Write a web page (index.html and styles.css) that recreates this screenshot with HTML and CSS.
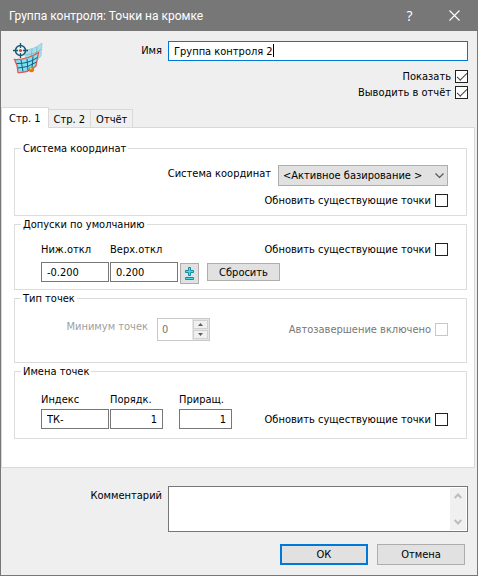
FILE: index.html
```
<!DOCTYPE html>
<html lang="ru">
<head>
    <meta charset="UTF-8">
    <meta name="viewport" content="width=device-width, initial-scale=1.0">
    <title>Группа контроля: Точки на кромке</title>
    <link rel="stylesheet" href="styles.css">
</head>
<body>

<div class="dialog">
    <header class="titlebar">
        <h1 class="title">Группа контроля: Точки на кромке</h1>
        <button class="title-btn" type="button">?</button>
        <button class="title-btn" type="button" aria-label="Закрыть">
            <svg width="11" height="11" viewBox="0 0 11 11"><path d="M.5.5l10 10M10.5.5l-10 10" fill="none" stroke="#fff" stroke-width="1.1"/></svg>
        </button>
    </header>

    <form class="content">
        <div class="head">
            <svg class="logo" width="30" height="32" viewBox="0 0 30 32">
                <path d="M10 8Q21 8 29 1L28 14Q25 19 15 21Z" fill="#a6dfea" stroke="#8fc5cf" stroke-width=".7"/>
                <path d="M13 13Q23 12 28 7M19 7L18 17M24 5L23 15" fill="none" stroke="#70b9c8" stroke-width=".8"/>
                <path d="M1.500 17.500Q14 18 25.500 10.500L23 24Q15 31 5 30.500Q5 24 1.500 17.500Z" fill="#7fe0f5" stroke="#e4574e" stroke-width="1.300"/>
                <path d="M3.500 21.500Q15 22 24.500 15.500M5 26Q15 26 23.500 20M8 18L10 29.500M14 17L15 28.500M20 14.500L19 26" fill="none" stroke="#176078" stroke-width="1"/>
                <circle cx="7.500" cy="8.500" r="5" fill="#e7f2f5" stroke="#175870" stroke-width="1.500"/>
                <path d="M7.500 1v5M7.500 11v5M0 8.500h5M10 8.500h5" stroke="#175870" stroke-width="1.300"/>
                <circle cx="7.500" cy="8.500" r="1.600" fill="#e33d31"/>
                <circle cx="18.500" cy="27.500" r="2.700" fill="#e87508"/>
                <circle cx="17.700" cy="26.600" r="1" fill="#ffc16a"/>
            </svg>
            <label class="side-label" for="name">Имя</label>
            <div class="name-box">
                <input class="text name" id="name" type="text" value="Группа контроля 2">
                <span class="caret"></span>
            </div>
        </div>
        <div class="flags">
            <label class="check">Показать <input type="checkbox" checked></label>
            <label class="check">Выводить в отчёт <input type="checkbox" checked></label>
        </div>

        <div class="tabs" role="tablist">
            <button class="tab active" type="button" role="tab" aria-selected="true">Стр. 1</button>
            <button class="tab" type="button" role="tab">Стр. 2</button>
            <button class="tab" type="button" role="tab">Отчёт</button>
        </div>

        <div class="panel">
            <fieldset class="group">
                <legend>Система координат</legend>
                <div class="group-body coords">
                    <div class="row-end">
                        <label for="system">Система координат</label>
                        <div class="select-box">
                            <select id="system">
                                <option>&lt;Активное базирование &gt;</option>
                            </select>
                            <svg class="arrow" width="9" height="6" viewBox="0 0 9 6"><path d="M.5.5l4 4 4-4" fill="none" stroke="#555" stroke-width="1.200"/></svg>
                        </div>
                    </div>
                    <label class="check">Обновить существующие точки <input type="checkbox"></label>
                </div>
            </fieldset>

            <fieldset class="group">
                <legend>Допуски по умолчанию</legend>
                <div class="group-body tolerances">
                    <div class="row">
                        <div class="labels">
                            <label for="low">Ниж.откл</label>
                            <label for="high">Верх.откл</label>
                        </div>
                        <label class="check">Обновить существующие точки <input type="checkbox"></label>
                    </div>
                    <div class="fields">
                        <input class="text" id="low" type="text" value="-0.200">
                        <input class="text" id="high" type="text" value="0.200">
                        <div class="actions">
                            <button class="btn btn-icon" type="button" aria-label="Плюс-минус">
                                <svg width="9" height="13" viewBox="0 0 9 13"><path d="M3.500.5h2v3h3v2h-3v3h-2v-3h-3v-2h3zM.5 10.500h8v2H.5z" fill="#45dced" stroke="#138ca3"/></svg>
                            </button>
                            <button class="btn btn-reset" type="button">Сбросить</button>
                        </div>
                    </div>
                </div>
            </fieldset>

            <fieldset class="group">
                <legend>Тип точек</legend>
                <div class="group-body types">
                    <div class="row">
                        <div class="minimum">
                            <label class="off" for="minimum">Минимум точек</label>
                            <div class="spinner">
                                <input id="minimum" type="text" value="0" disabled>
                                <div class="spin-btns">
                                    <button type="button" aria-label="Больше" disabled><svg width="5" height="3" viewBox="0 0 5 3"><path d="M0 3L2.500 0 5 3z" fill="#606060"/></svg></button>
                                    <button type="button" aria-label="Меньше" disabled><svg width="5" height="3" viewBox="0 0 5 3"><path d="M0 0L2.500 3 5 0z" fill="#606060"/></svg></button>
                                </div>
                            </div>
                        </div>
                        <label class="check check-off">Автозавершение включено <input type="checkbox" disabled></label>
                    </div>
                </div>
            </fieldset>

            <fieldset class="group">
                <legend>Имена точек</legend>
                <div class="group-body names">
                    <div class="labels">
                        <label for="index">Индекс</label>
                        <label for="order">Порядк.</label>
                        <label for="step">Приращ.</label>
                    </div>
                    <div class="row">
                        <div class="fields">
                            <input class="text" id="index" type="text" value="ТК-">
                            <input class="text number" id="order" type="text" value="1">
                            <input class="text number" id="step" type="text" value="1">
                        </div>
                        <label class="check">Обновить существующие точки <input type="checkbox"></label>
                    </div>
                </div>
            </fieldset>
        </div>

        <div class="comment">
            <label class="side-label" for="comment">Комментарий</label>
            <div class="comment-box">
                <textarea id="comment"></textarea>
                <div class="scrollbar">
                    <svg width="8" height="6" viewBox="0 0 8 6"><path d="M.7 5L4 1.500 7.300 5" fill="none" stroke="#bcbcbc" stroke-width="2"/></svg>
                    <svg width="8" height="6" viewBox="0 0 8 6"><path d="M.7 1L4 4.500 7.300 1" fill="none" stroke="#bcbcbc" stroke-width="2"/></svg>
                </div>
            </div>
        </div>

        <div class="buttons">
            <button class="btn btn-main btn-default" type="submit">ОК</button>
            <button class="btn btn-main" type="button">Отмена</button>
        </div>
    </form>
</div>

</body>
</html>
```
FILE: styles.css
```
* { box-sizing: border-box; }
body { margin: 0; background: #efefef; color: #000; font-family: "DejaVu Sans Condensed", "DejaVu Sans", sans-serif; font-size: 11px; line-height: 13px; }
input, select, textarea, button { margin: 0; font: inherit; color: inherit; border-radius: 0; }
label, legend, button { white-space: nowrap; }

.dialog { border: 1px solid #777; border-top: 0; background: #efefef; }

/* title bar */
.titlebar { display: flex; align-items: center; height: 31px; padding-left: 8px; background: #777; color: #fff; font-family: Roboto, "Open Sans", sans-serif; }
.title { flex: 1; margin: 0; font-size: 12px; font-weight: normal; line-height: 16px; }
.title-btn { display: flex; align-items: center; justify-content: center; width: 45px; height: 31px; padding: 0; border: 0; background: none; font-family: "Open Sans", sans-serif; font-size: 14px; }

/* top part */
.head { display: flex; align-items: flex-start; gap: 6px; padding: 10px 9px 0 12px; }
.logo { margin-top: 1px; }
.side-label { flex: 1; padding-top: 3px; text-align: right; }
.name-box { position: relative; width: 300px; }
.text { width: 100%; height: 20px; padding: 0 5px; border: 1px solid #777; background: #fff; }
.name { border-color: #0078d7; outline: none; display: block; }
.caret { position: absolute; top: 3px; left: 105px; width: 1px; height: 13px; background: #000; }
.flags { display: flex; flex-direction: column; align-items: flex-end; gap: 3px; margin-top: -4px; padding-right: 9px; }

.check { display: flex; align-items: center; justify-content: flex-end; gap: 4px; height: 13px; }
.check input { appearance: none; position: relative; width: 13px; height: 13px; border: 1px solid #222; background: #fff; }
.check input:checked::after { content: ""; position: absolute; top: 2px; left: 1px; width: 9px; height: 4px; border: solid #444; border-width: 0 0 1px 1px; transform: rotate(-45deg); }
.check-off { color: #777; }
.check-off input { border-color: #c8c8c8; }
.off { color: #a0a0a0; }

/* tabs */
.tabs { display: flex; align-items: flex-end; margin-top: 8px; }
.tab { height: 18px; padding: 1px 5px 0; border: 1px solid #d9d9d9; border-width: 1px 1px 0 0; background: #f0f0f0; }
.tab.active { position: relative; height: 21px; margin-bottom: -1px; padding: 0 7px; border-left-width: 1px; background: #fff; }
.panel { display: flex; flex-direction: column; gap: 2px; margin-right: 2px; padding: 14px 7px 28px 12px; border: 1px solid #d9d9d9; background: #fff; }

/* groups */
.group { min-width: 0; margin: 0; padding: 0; border: 1px solid #dcdcdc; }
.group legend { margin-left: 6px; padding: 0 2px; height: 13px; }
.group-body { display: flex; flex-direction: column; padding-left: 26px; padding-right: 18px; }
.row { display: flex; align-items: center; justify-content: space-between; }
.row-end { display: flex; justify-content: flex-end; gap: 7px; }
.row-end label { padding-top: 2px; }
.coords { gap: 8px; padding-top: 10px; padding-bottom: 8px; }
.tolerances { gap: 6px; padding-top: 12px; padding-bottom: 5px; }
.types { padding-top: 13px; padding-bottom: 21px; }
.names { gap: 3px; padding-top: 15px; padding-bottom: 9px; }
.labels, .fields { display: grid; grid-template-columns: 68px 68px 53px; column-gap: 1px; }
.number { text-align: right; }

.select-box { position: relative; width: 170px; }
.select-box select { display: block; appearance: none; width: 100%; height: 21px; padding: 0 4px; border: 1px solid #adadad; background: #e1e1e1; }
.arrow { position: absolute; top: 8px; right: 4px; pointer-events: none; }

.names .number { width: 53px; }

.btn { padding: 0; border: 1px solid #adadad; background: #e1e1e1; }
.actions { display: flex; align-items: flex-start; gap: 8px; padding: 1px 0 0 1px; }
.btn-icon { display: flex; flex: none; align-items: center; justify-content: center; width: 19px; height: 21px; }
.btn-reset { flex: none; width: 73px; height: 18px; }

.minimum { display: flex; justify-content: flex-end; gap: 9px; width: 169px; }
.minimum label { padding-top: 2px; }
.spinner { display: flex; width: 53px; height: 23px; border: 1px solid #c8c8c8; }
.spinner input { flex: 1; min-width: 0; padding: 0 4px; border: 0; background: #fff; color: #777; }
.spin-btns { display: flex; flex-direction: column; width: 17px; gap: 1px; padding: 1px; background: #e6e6e6; }
.spin-btns button { display: flex; flex: 1; align-items: center; justify-content: center; padding: 0; border: 1px solid #d0d0d0; background: #f0f0f0; }

/* bottom part */
.comment { display: flex; gap: 6px; margin-top: 18px; padding-right: 9px; }
.comment-box { position: relative; width: 300px; height: 46px; }
.comment textarea { display: block; width: 100%; height: 100%; padding: 2px 20px 2px 4px; border: 1px solid #777; background: #fff; resize: none; overflow: hidden; }
.scrollbar { position: absolute; top: 2px; right: 2px; bottom: 2px; width: 16px; display: flex; flex-direction: column; align-items: center; justify-content: space-between; padding: 5px 0; background: #f0f0f0; }
.buttons { display: flex; justify-content: flex-end; gap: 9px; padding: 12px 12px 10px; }
.btn-main { width: 88px; height: 21px; }
.btn-default { border: 2px solid #0078d7; }
```
